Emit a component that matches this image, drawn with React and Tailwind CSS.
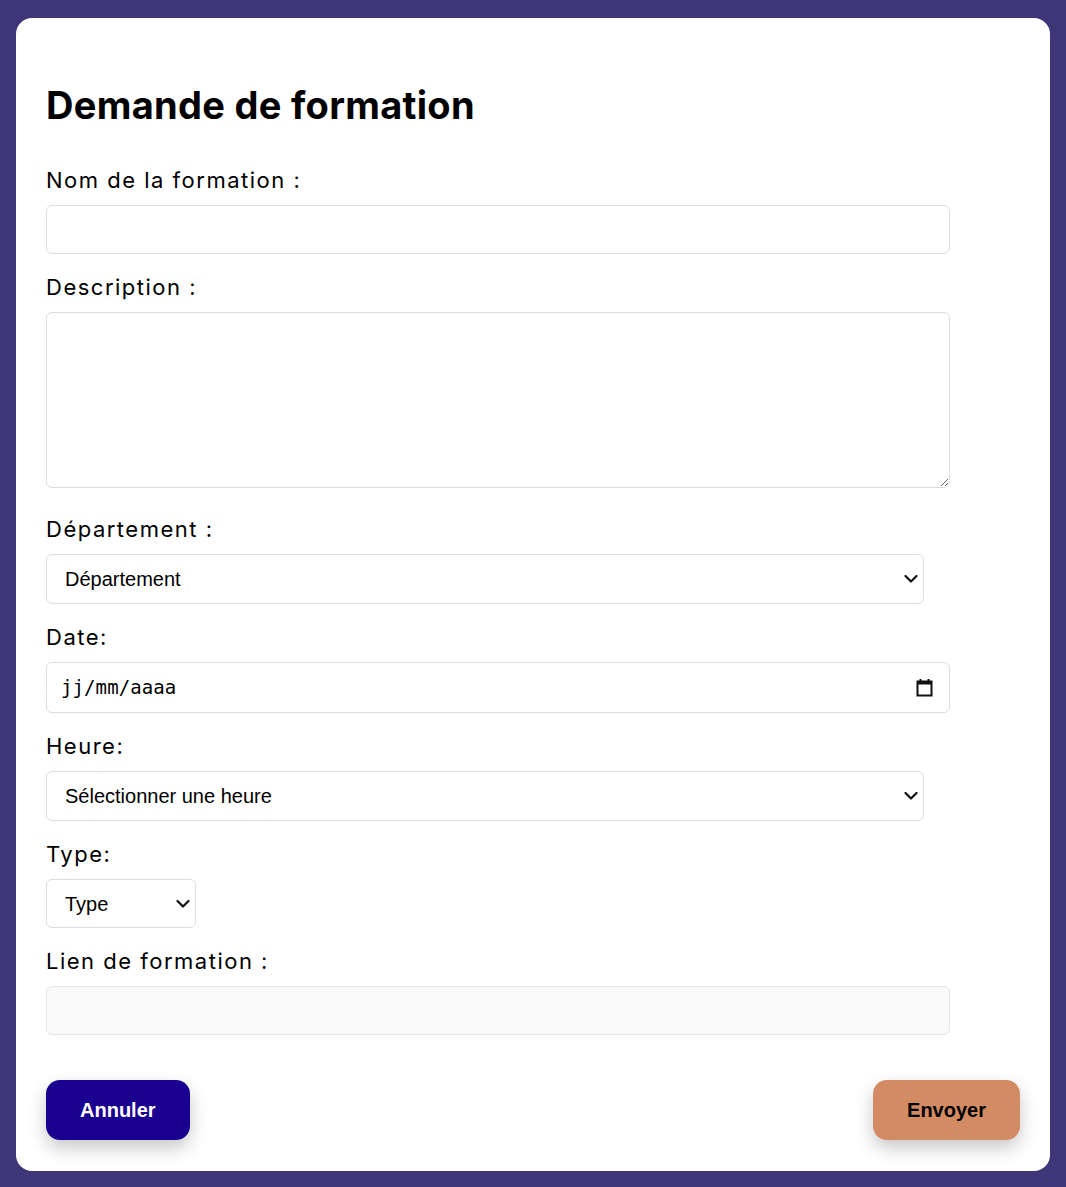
import React from "react";

function Label({ children, className = "" }) {
  return (
    <label className={"block h-[33px] leading-[33px] text-[22px] tracking-[1.5px] mb-[8px] " + className}>
      {children}
    </label>
  );
}

function CalendarIcon() {
  return (
    <svg width="17" height="19" viewBox="0 0 17 19" fill="none">
      <rect x="1.5" y="3.5" width="14" height="14" stroke="#111" strokeWidth="2" />
      <rect x="1.5" y="3.5" width="14" height="3" fill="#111" />
      <rect x="3.5" y="1" width="2" height="3" fill="#111" />
      <rect x="11.5" y="1" width="2" height="3" fill="#111" />
    </svg>
  );
}

function Chevron() {
  return (
    <svg
      className="pointer-events-none absolute right-[6px] top-1/2 -translate-y-1/2"
      width="14"
      height="9"
      viewBox="0 0 14 9"
      fill="none"
    >
      <path d="M1.5 1.5 L7 7 L12.5 1.5" stroke="#111" strokeWidth="2.2" strokeLinecap="round" strokeLinejoin="round" />
    </svg>
  );
}

function Select({ width, height, text }) {
  return (
    <div className={"relative " + width}>
      <select
        defaultValue=""
        className={
          "block w-full appearance-none pl-[18px] pr-[30px] text-[20px] text-black font-['Liberation_Sans',Arial,sans-serif] outline-none border border-[#dddddd] rounded-[6px] bg-white " +
          height
        }
      >
        <option value="">{text}</option>
      </select>
      <Chevron />
    </div>
  );
}

export default function App() {
  const field = "border border-[#dddddd] rounded-[6px] bg-white";
  return (
    <div className="min-h-screen bg-[#3f3679] pt-[18px] pb-[17px] px-[16px]">
      <div className="bg-white rounded-[16px] px-[30px] pt-[64px] pb-[31px] text-black font-['Inter',sans-serif]">
        <h1 className="text-[38px] leading-[46px] font-bold tracking-[0.3px]">Demande de formation</h1>

        <div className="mt-[36px]">
          <Label>Nom de la formation :</Label>
          <input type="text" className={"block w-[904px] h-[49px] " + field} />
        </div>

        <div className="mt-[17px]">
          <Label>Description :</Label>
          <textarea className={"block w-[904px] h-[176px] resize-y " + field} />
        </div>

        <div className="mt-[25px]">
          <Label>Département :</Label>
          <Select width="w-[878px]" height="h-[50px]" text="Département" />
        </div>

        <div className="mt-[17px]">
          <Label>Date:</Label>
          <div className={"flex items-center justify-between w-[904px] h-[51px] pl-[14px] pr-[16px] " + field}>
            <span className="font-['DejaVu_Sans_Mono',monospace] text-[19px] tracking-[0.1px]">jj/mm/aaaa</span>
            <CalendarIcon />
          </div>
        </div>

        <div className="mt-[17px]">
          <Label>Heure:</Label>
          <Select width="w-[878px]" height="h-[50px]" text="Sélectionner une heure" />
        </div>

        <div className="mt-[17px]">
          <Label>Type:</Label>
          <Select width="w-[150px]" height="h-[49px]" text="Type" />
        </div>

        <div className="mt-[17px]">
          <Label>Lien de formation :</Label>
          <input type="text" disabled className="block w-[904px] h-[49px] border border-[#e5e5e5] rounded-[6px] bg-[#fafafa]" />
        </div>

        <div className="mt-[45px] flex justify-between font-['Liberation_Sans',Arial,sans-serif] font-bold text-[20px]">
          <button className="h-[60px] px-[34px] rounded-[14px] bg-[#1a0091] text-white shadow-[0_8px_18px_rgba(0,0,0,0.22)]">
            Annuler
          </button>
          <button className="h-[60px] px-[34px] rounded-[14px] bg-[#d38b63] text-black shadow-[0_8px_18px_rgba(0,0,0,0.22)]">
            Envoyer
          </button>
        </div>
      </div>
    </div>
  );
}
